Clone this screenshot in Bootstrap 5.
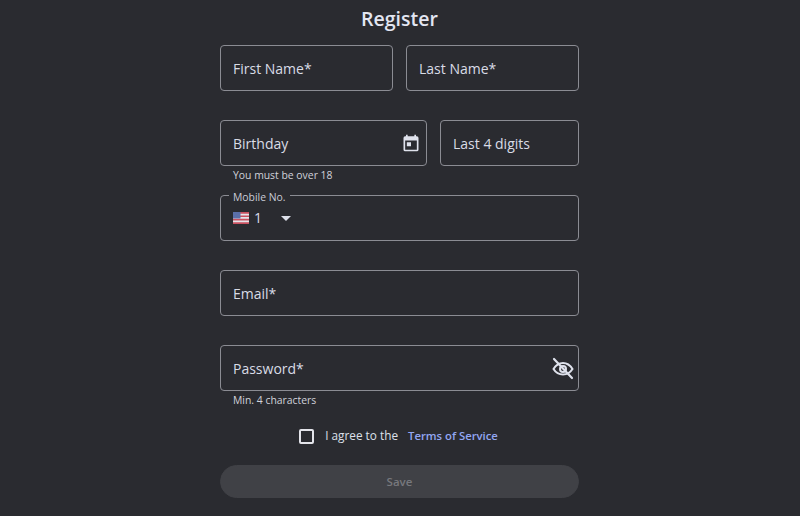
<!DOCTYPE html>
<html lang="en">
<head>
    <meta charset="UTF-8">
    <meta name="viewport" content="width=device-width, initial-scale=1.0">
    <title>Register</title>
    <link rel="stylesheet" href="https://cdn.jsdelivr.net/npm/bootstrap@5.3.0/dist/css/bootstrap.min.css">
    <style>
        html, body {
            height: 516px;
            overflow: hidden;
        }
        body {
            font-family: "Open Sans", "Liberation Sans", sans-serif;
            background-color: #2a2b30;
            color: #dde0ea;
        }
        .reg-form {
            width: 359px;
            margin-left: 220px;
        }
        .reg-title {
            font-size: 19.5px;
            font-weight: 600;
            line-height: 27px;
            height: 45px;
            padding-top: 5px;
            margin: 0;
            text-align: center;
            color: #e3e6f2;
        }
        .field-group {
            height: 75px;
            column-gap: 13px;
        }
        .field-box {
            position: relative;
            height: 46px;
            border: 1px solid #8b8c93;
            border-radius: 4px;
            padding: 0 12px;
            font-size: 14px;
            color: #d9dce6;
        }
        .half-box {
            width: 173px;
        }
        .birthday-col {
            width: 207px;
        }
        .birthday-box {
            padding-right: 5px;
        }
        .digits-box {
            width: 139px;
        }
        .password-box {
            padding-right: 3px;
        }
        .field-hint {
            font-size: 10.4px;
            line-height: 14px;
            padding: 2px 0 0 13px;
            color: #d0d2da;
        }
        .field-legend {
            position: absolute;
            top: -6px;
            left: 8px;
            padding: 0 4px;
            font-size: 10.4px;
            line-height: 14px;
            background-color: #2a2b30;
            color: #c9ccd6;
        }
        .phone-code {
            padding-top: 11px;
        }
        .flag-icon {
            margin: 1px 5px 0 0;
        }
        .caret-down {
            width: 0;
            height: 0;
            margin: 1px 0 0 19px;
            border-left: 5px solid transparent;
            border-right: 5px solid transparent;
            border-top: 5px solid #dde0ea;
        }
        .agree-row {
            height: 45px;
            padding: 9px 2px 0 0;
            font-size: 11.8px;
            line-height: 14px;
        }
        .agree-text {
            margin-top: -1px;
        }
        .agree-box {
            width: 15px;
            height: 15px;
            border: 2px solid #e3e4ea;
            border-radius: 2px;
            margin-right: 11px;
        }
        .agree-link {
            color: #93a7f2;
            text-decoration: none;
            margin-left: 10px;
            font-size: 11.3px;
            font-weight: 600;
        }
        .save-btn {
            --bs-btn-disabled-bg: #404146;
            --bs-btn-disabled-color: #77787d;
            --bs-btn-disabled-opacity: 1;
            --bs-btn-disabled-border-color: #404146;
            width: 100%;
            height: 33px;
            padding: 0;
            border-radius: 17px;
            font-size: 11.5px;
            font-weight: 600;
        }
    </style>
</head>
<body>
    <form class="reg-form">
        <h1 class="reg-title">Register</h1>

        <div class="field-group d-flex">
            <div class="field-box half-box d-flex align-items-center">First Name*</div>
            <div class="field-box half-box d-flex align-items-center">Last Name*</div>
        </div>

        <div class="field-group d-flex">
            <div class="birthday-col">
                <div class="field-box d-flex align-items-center justify-content-between birthday-box">
                    Birthday
                    <svg width="20" height="20" viewBox="0 0 24 24" fill="#dfe2ec"><path d="M19 4h-1V2h-2v2H8V2H6v2H5a2 2 0 0 0-2 2v14a2 2 0 0 0 2 2h14a2 2 0 0 0 2-2V6a2 2 0 0 0-2-2zm0 16H5V9h14v11zM7 11h5v5H7z"/></svg>
                </div>
                <div class="field-hint">You must be over 18</div>
            </div>
            <div class="field-box d-flex align-items-center digits-box">Last 4 digits</div>
        </div>

        <div class="field-group">
            <div class="field-box">
                <span class="field-legend">Mobile No.</span>
                <div class="phone-code d-flex align-items-center">
                    <svg class="flag-icon" width="16" height="12" viewBox="0 0 16 12">
                        <rect width="16" height="12" fill="#e4e4ea"/>
                        <path d="M0 0h16v1.700H0zM0 3.400h16v1.700H0zM0 6.800h16v1.700H0zM0 10.200h16V12H0z" fill="#c9505f"/>
                        <rect width="7.500" height="6.500" fill="#5b6fa8"/>
                    </svg>
                    <span>1</span>
                    <span class="caret-down"></span>
                </div>
            </div>
        </div>

        <div class="field-group">
            <div class="field-box d-flex align-items-center">Email*</div>
        </div>

        <div class="field-group">
            <div class="field-box d-flex align-items-center justify-content-between password-box">
                Password*
                <svg width="24" height="24" viewBox="0 0 24 24" fill="none" stroke="#dfe2ec" stroke-width="2" stroke-linecap="round">
                    <path d="M2.500 13C5 9 8 7 12 7s7 2 9.500 6c-2.500 4-5.500 5.500-9.500 5.500S5 17 2.500 13z"/>
                    <circle cx="12" cy="13" r="3"/>
                    <path d="M3 3l18 19" stroke-width="2.200"/>
                </svg>
            </div>
            <div class="field-hint">Min. 4 characters</div>
        </div>

        <div class="agree-row d-flex justify-content-center">
            <span class="agree-box"></span>
            <span class="agree-text">I agree to the</span>
            <a class="agree-link" href="#">Terms of Service</a>
        </div>

        <button type="button" class="btn save-btn" disabled>Save</button>
    </form>
    <script src="https://cdn.jsdelivr.net/npm/bootstrap@5.3.0/dist/js/bootstrap.bundle.min.js"></script>
</body>
</html>
